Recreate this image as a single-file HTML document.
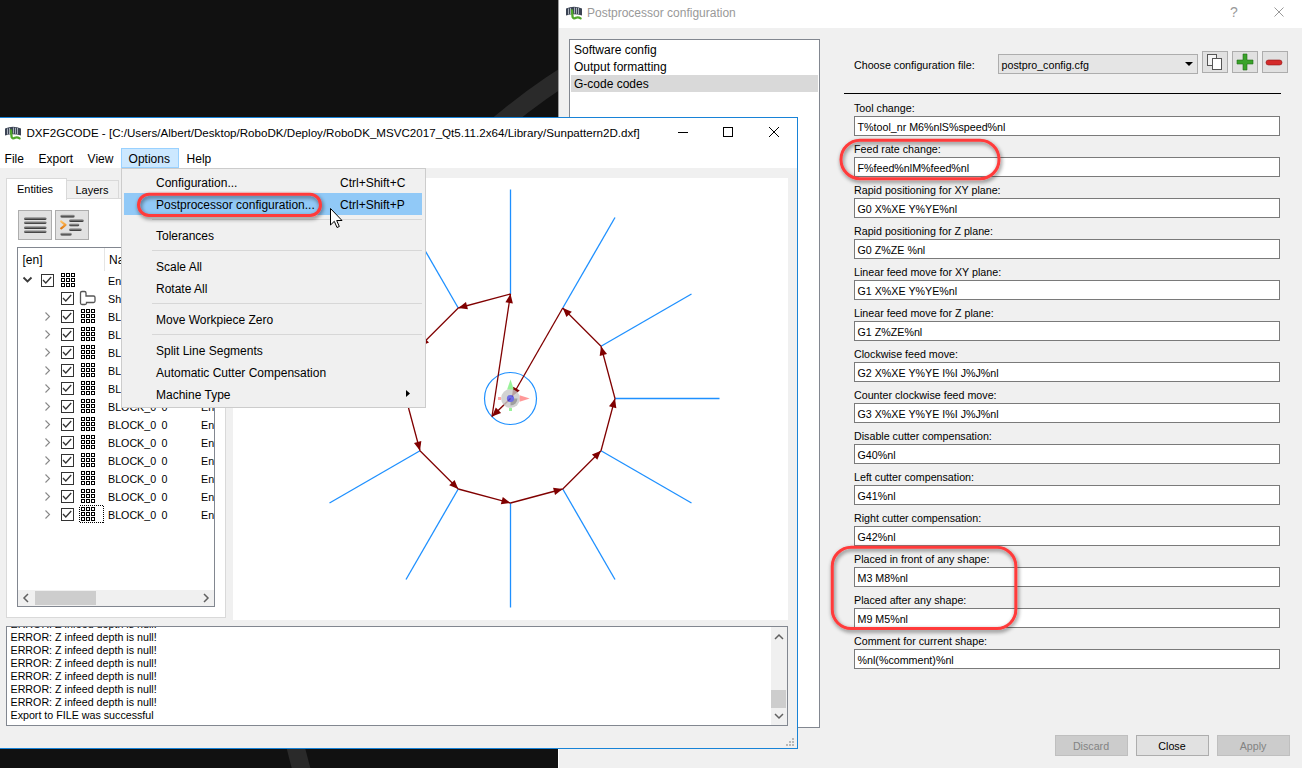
<!DOCTYPE html>
<html><head><meta charset="utf-8"><style>
html,body{margin:0;padding:0;background:#111;overflow:hidden;}
svg{display:block;font-family:"Liberation Sans", sans-serif;}
</style></head><body>
<svg width="1302" height="768" viewBox="0 0 1302 768">
<rect x="0" y="0" width="1302" height="768" fill="#111111"/>
<circle cx="900" cy="600" r="622" fill="none" stroke="#2a2a2a" stroke-width="18"/>
<rect x="558" y="0" width="1" height="118" fill="#9c9c9c"/>
<rect x="558" y="749" width="1" height="19" fill="#ffffff"/>
<rect x="559" y="0" width="743" height="28" fill="#ffffff"/>
<rect x="559" y="28" width="743" height="740" fill="#f0f0f0"/>
<g transform="translate(566,5)">
<path d="M0 3.5 Q8 0 16 3.5 L16 10.5 Q8 8 0 10.5 Z" fill="#3c4454"/>
<path d="M2.5 3.5 V9.5 M4.5 3 V9 M8.5 2.5 V8.5 M10.5 2.8 V8.8 M12.5 3 V9" stroke="#c5cbd6" stroke-width="0.8"/>
<path d="M6 5.5 L6.6 12 Q7.6 14.3 10 12.8 Q12 11.6 14.6 13.4" fill="none" stroke="#4fa82a" stroke-width="2.3" stroke-linecap="round"/>
</g>
<text x="587" y="17" font-size="12" fill="#999999" text-anchor="start" >Postprocessor configuration</text>
<text x="1234" y="17" font-size="14" fill="#999999" text-anchor="middle" >?</text>
<path d="M1274.5 7.5 L1283.5 16.5 M1283.5 7.5 L1274.5 16.5" stroke="#999" stroke-width="1"/>
<rect x="569.5" y="39.5" width="250" height="688" fill="#ffffff" stroke="#828790" stroke-width="1"/>
<rect x="571" y="75" width="247" height="17" fill="#d9d9d9"/>
<text x="574" y="54" font-size="12" fill="#000" text-anchor="start" >Software config</text>
<text x="574" y="71" font-size="12" fill="#000" text-anchor="start" >Output formatting</text>
<text x="574" y="88" font-size="12" fill="#000" text-anchor="start" >G-code codes</text>
<text x="854" y="68.6" font-size="10.7" fill="#000" text-anchor="start" >Choose configuration file:</text>
<rect x="998.5" y="54.5" width="199" height="19" fill="#e5e5e5" stroke="#adadad" stroke-width="1"/>
<text x="1001.5" y="68.8" font-size="10.7" fill="#000" text-anchor="start" >postpro_config.cfg</text>
<path d="M1185 62 L1193 62 L1189 66 Z" fill="#000"/>
<rect x="1202.5" y="51.5" width="25" height="21" fill="#e1e1e1" stroke="#adadad" stroke-width="1"/>
<rect x="1232.5" y="51.5" width="25" height="21" fill="#e1e1e1" stroke="#adadad" stroke-width="1"/>
<rect x="1262.5" y="51.5" width="25" height="21" fill="#e1e1e1" stroke="#adadad" stroke-width="1"/>
<g transform="translate(1207,54)"><rect x="0.5" y="0.5" width="9" height="11" fill="#f4f4f4" stroke="#555"/><rect x="5.5" y="4.5" width="9" height="11" fill="#fff" stroke="#555"/></g>
<g transform="translate(1237,54)"><path d="M6 0 h4 v6 h6 v4 h-6 v6 h-4 v-6 h-6 v-4 h6 z" fill="#3aa32a" stroke="#236b17" stroke-width="0.6"/></g>
<g transform="translate(1266,58)"><rect x="0" y="2" width="16" height="5" rx="2.5" fill="#d42a2a" stroke="#8e1515" stroke-width="0.6"/></g>
<rect x="844" y="93" width="437" height="1" fill="#000000"/>
<text x="854" y="111.8" font-size="10.7" fill="#000" text-anchor="start" >Tool change:</text>
<rect x="854.5" y="116.5" width="425" height="19" fill="#ffffff" stroke="#7a7a7a" stroke-width="1"/>
<text x="857.5" y="130.8" font-size="10.7" fill="#000" text-anchor="start" >T%tool_nr M6%nlS%speed%nl</text>
<text x="854" y="152.8" font-size="10.7" fill="#000" text-anchor="start" >Feed rate change:</text>
<rect x="854.5" y="157.5" width="425" height="19" fill="#ffffff" stroke="#7a7a7a" stroke-width="1"/>
<text x="857.5" y="171.8" font-size="10.7" fill="#000" text-anchor="start" >F%feed%nlM%feed%nl</text>
<text x="854" y="193.8" font-size="10.7" fill="#000" text-anchor="start" >Rapid positioning for XY plane:</text>
<rect x="854.5" y="198.5" width="425" height="19" fill="#ffffff" stroke="#7a7a7a" stroke-width="1"/>
<text x="857.5" y="212.8" font-size="10.7" fill="#000" text-anchor="start" >G0 X%XE Y%YE%nl</text>
<text x="854" y="234.8" font-size="10.7" fill="#000" text-anchor="start" >Rapid positioning for Z plane:</text>
<rect x="854.5" y="239.5" width="425" height="19" fill="#ffffff" stroke="#7a7a7a" stroke-width="1"/>
<text x="857.5" y="253.8" font-size="10.7" fill="#000" text-anchor="start" >G0 Z%ZE %nl</text>
<text x="854" y="275.8" font-size="10.7" fill="#000" text-anchor="start" >Linear feed move for XY plane:</text>
<rect x="854.5" y="280.5" width="425" height="19" fill="#ffffff" stroke="#7a7a7a" stroke-width="1"/>
<text x="857.5" y="294.8" font-size="10.7" fill="#000" text-anchor="start" >G1 X%XE Y%YE%nl</text>
<text x="854" y="316.8" font-size="10.7" fill="#000" text-anchor="start" >Linear feed move for Z plane:</text>
<rect x="854.5" y="321.5" width="425" height="19" fill="#ffffff" stroke="#7a7a7a" stroke-width="1"/>
<text x="857.5" y="335.8" font-size="10.7" fill="#000" text-anchor="start" >G1 Z%ZE%nl</text>
<text x="854" y="357.8" font-size="10.7" fill="#000" text-anchor="start" >Clockwise feed move:</text>
<rect x="854.5" y="362.5" width="425" height="19" fill="#ffffff" stroke="#7a7a7a" stroke-width="1"/>
<text x="857.5" y="376.8" font-size="10.7" fill="#000" text-anchor="start" >G2 X%XE Y%YE I%I J%J%nl</text>
<text x="854" y="398.8" font-size="10.7" fill="#000" text-anchor="start" >Counter clockwise feed move:</text>
<rect x="854.5" y="403.5" width="425" height="19" fill="#ffffff" stroke="#7a7a7a" stroke-width="1"/>
<text x="857.5" y="417.8" font-size="10.7" fill="#000" text-anchor="start" >G3 X%XE Y%YE I%I J%J%nl</text>
<text x="854" y="439.8" font-size="10.7" fill="#000" text-anchor="start" >Disable cutter compensation:</text>
<rect x="854.5" y="444.5" width="425" height="19" fill="#ffffff" stroke="#7a7a7a" stroke-width="1"/>
<text x="857.5" y="458.8" font-size="10.7" fill="#000" text-anchor="start" >G40%nl</text>
<text x="854" y="480.8" font-size="10.7" fill="#000" text-anchor="start" >Left cutter compensation:</text>
<rect x="854.5" y="485.5" width="425" height="19" fill="#ffffff" stroke="#7a7a7a" stroke-width="1"/>
<text x="857.5" y="499.8" font-size="10.7" fill="#000" text-anchor="start" >G41%nl</text>
<text x="854" y="521.8" font-size="10.7" fill="#000" text-anchor="start" >Right cutter compensation:</text>
<rect x="854.5" y="526.5" width="425" height="19" fill="#ffffff" stroke="#7a7a7a" stroke-width="1"/>
<text x="857.5" y="540.8" font-size="10.7" fill="#000" text-anchor="start" >G42%nl</text>
<text x="854" y="562.8" font-size="10.7" fill="#000" text-anchor="start" >Placed in front of any shape:</text>
<rect x="854.5" y="567.5" width="425" height="19" fill="#ffffff" stroke="#7a7a7a" stroke-width="1"/>
<text x="857.5" y="581.8" font-size="10.7" fill="#000" text-anchor="start" >M3 M8%nl</text>
<text x="854" y="603.8" font-size="10.7" fill="#000" text-anchor="start" >Placed after any shape:</text>
<rect x="854.5" y="608.5" width="425" height="19" fill="#ffffff" stroke="#7a7a7a" stroke-width="1"/>
<text x="857.5" y="622.8" font-size="10.7" fill="#000" text-anchor="start" >M9 M5%nl</text>
<text x="854" y="644.8" font-size="10.7" fill="#000" text-anchor="start" >Comment for current shape:</text>
<rect x="854.5" y="649.5" width="425" height="19" fill="#ffffff" stroke="#7a7a7a" stroke-width="1"/>
<text x="857.5" y="663.8" font-size="10.7" fill="#000" text-anchor="start" >%nl(%comment)%nl</text>
<rect x="1055.5" y="735.5" width="72" height="20" fill="#cccccc" stroke="#bfbfbf" stroke-width="1"/>
<text x="1091" y="750" font-size="10.7" fill="#838383" text-anchor="middle" >Discard</text>
<rect x="1136.5" y="735.5" width="72" height="20" fill="#e1e1e1" stroke="#adadad" stroke-width="1"/>
<text x="1172" y="750" font-size="10.7" fill="#000" text-anchor="middle" >Close</text>
<rect x="1217.5" y="735.5" width="72" height="20" fill="#cccccc" stroke="#bfbfbf" stroke-width="1"/>
<text x="1253" y="750" font-size="10.7" fill="#838383" text-anchor="middle" >Apply</text>
<rect x="0" y="118" width="797" height="50" fill="#ffffff"/>
<rect x="0" y="168" width="797" height="580" fill="#f0f0f0"/>
<rect x="0" y="117" width="798" height="1" fill="#1883d7"/>
<rect x="797" y="117" width="1" height="632" fill="#1883d7"/>
<rect x="0" y="748" width="798" height="1" fill="#1883d7"/>
<g transform="translate(5,125)">
<path d="M0 3.5 Q8 0 16 3.5 L16 10.5 Q8 8 0 10.5 Z" fill="#3c4454"/>
<path d="M2.5 3.5 V9.5 M4.5 3 V9 M8.5 2.5 V8.5 M10.5 2.8 V8.8 M12.5 3 V9" stroke="#c5cbd6" stroke-width="0.8"/>
<path d="M6 5.5 L6.6 12 Q7.6 14.3 10 12.8 Q12 11.6 14.6 13.4" fill="none" stroke="#4fa82a" stroke-width="2.3" stroke-linecap="round"/>
</g>
<text x="26.5" y="137" font-size="11.6" fill="#000" text-anchor="start" >DXF2GCODE - [C:/Users/Albert/Desktop/RoboDK/Deploy/RoboDK_MSVC2017_Qt5.11.2x64/Library/Sunpattern2D.dxf]</text>
<rect x="678" y="132" width="10" height="1" fill="#000"/>
<rect x="723.5" y="127.5" width="9" height="9" fill="none" stroke="#000" stroke-width="1"/>
<path d="M769 127 L779 137 M779 127 L769 137" stroke="#000" stroke-width="1"/>
<rect x="121.5" y="148.5" width="57" height="19" fill="#cce8ff" stroke="#99d1ff" stroke-width="1"/>
<text x="4.6" y="162.7" font-size="12" fill="#000" text-anchor="start" >File</text>
<text x="38.5" y="162.7" font-size="12" fill="#000" text-anchor="start" >Export</text>
<text x="87.6" y="162.7" font-size="12" fill="#000" text-anchor="start" >View</text>
<text x="128.60000000000002" y="162.7" font-size="12" fill="#000" text-anchor="start" >Options</text>
<text x="186.60000000000002" y="162.7" font-size="12" fill="#000" text-anchor="start" >Help</text>
<rect x="66.5" y="180.5" width="52" height="18" fill="#f0f0f0" stroke="#d9d9d9" stroke-width="1"/>
<rect x="6.5" y="198.5" width="219" height="419" fill="#ffffff" stroke="#d9d9d9" stroke-width="1"/>
<rect x="6.5" y="178.5" width="60" height="21" fill="#ffffff" stroke="#d9d9d9" stroke-width="1"/>
<rect x="7" y="198" width="59" height="2" fill="#ffffff"/>
<text x="17" y="192.7" font-size="11" fill="#000" text-anchor="start" >Entities</text>
<text x="75.5" y="193.7" font-size="11" fill="#000" text-anchor="start" >Layers</text>
<rect x="18.5" y="210.5" width="33" height="29" fill="#e1e1e1" stroke="#adadad" stroke-width="1"/>
<rect x="55.5" y="210.5" width="33" height="29" fill="#e1e1e1" stroke="#adadad" stroke-width="1"/>
<defs><linearGradient id="bar" x1="0" y1="0" x2="0" y2="1"><stop offset="0" stop-color="#c8c8c8"/><stop offset="0.35" stop-color="#8a8a8a"/><stop offset="1" stop-color="#2a2a2a"/></linearGradient><linearGradient id="org" x1="0" y1="0" x2="0" y2="1"><stop offset="0" stop-color="#ffc060"/><stop offset="1" stop-color="#e07a10"/></linearGradient></defs>
<rect x="24" y="216.9" width="22.5" height="3" rx="1.5" fill="url(#bar)"/>
<rect x="24" y="221.1" width="22.5" height="3" rx="1.5" fill="url(#bar)"/>
<rect x="24" y="225.9" width="22.5" height="3" rx="1.5" fill="url(#bar)"/>
<rect x="24" y="230.1" width="22.5" height="3" rx="1.5" fill="url(#bar)"/>
<rect x="60.4" y="214.4" width="14.300000000000004" height="3" rx="1.5" fill="url(#bar)"/>
<rect x="69.1" y="218.9" width="14.600000000000009" height="3" rx="1.5" fill="url(#bar)"/>
<rect x="69.1" y="223.3" width="10.200000000000003" height="3" rx="1.5" fill="url(#bar)"/>
<rect x="69.1" y="228.0" width="12.600000000000009" height="3" rx="1.5" fill="url(#bar)"/>
<rect x="60.4" y="232.5" width="11.350000000000001" height="3" rx="1.5" fill="url(#bar)"/>
<path d="M61.2 221.5 L65.5 224.9 L61.2 228.3" fill="none" stroke="url(#org)" stroke-width="2.2" stroke-linecap="round" stroke-linejoin="round"/>
<rect x="17.5" y="247.5" width="197" height="359" fill="#ffffff" stroke="#828790" stroke-width="1"/>
<g>
<rect x="104" y="248" width="1" height="23" fill="#e5e5e5"/>
<text x="22.5" y="264.2" font-size="12" fill="#000" text-anchor="start" >[en]</text>
<text x="109" y="264.2" font-size="12" fill="#000" text-anchor="start" >Name</text>
<clipPath id="treeclip"><rect x="18" y="248" width="196" height="342"/></clipPath>
<g clip-path="url(#treeclip)">
<path d="M23.5 277.5 L27.5 281.5 L31.5 277.5" fill="none" stroke="#3a3a3a" stroke-width="1.8"/>
<rect x="41.5" y="274.5" width="12" height="12" fill="#ffffff" stroke="#333333" stroke-width="1"/>
<path d="M43 280 L45.8 283 L51.2 277" fill="none" stroke="#333" stroke-width="1.3"/>
<rect x="61.5" y="273.5" width="3" height="3" fill="none" stroke="#000" stroke-width="1"/><rect x="66.5" y="273.5" width="3" height="3" fill="none" stroke="#000" stroke-width="1"/><rect x="71.5" y="273.5" width="3" height="3" fill="none" stroke="#000" stroke-width="1"/><rect x="61.5" y="278.5" width="3" height="3" fill="none" stroke="#000" stroke-width="1"/><rect x="66.5" y="278.5" width="3" height="3" fill="none" stroke="#000" stroke-width="1"/><rect x="71.5" y="278.5" width="3" height="3" fill="none" stroke="#000" stroke-width="1"/><rect x="61.5" y="283.5" width="3" height="3" fill="none" stroke="#000" stroke-width="1"/><rect x="66.5" y="283.5" width="3" height="3" fill="none" stroke="#000" stroke-width="1"/><rect x="71.5" y="283.5" width="3" height="3" fill="none" stroke="#000" stroke-width="1"/>
<text x="108" y="284.5" font-size="10.7" fill="#000" text-anchor="start" >Entities</text>
<rect x="61.5" y="292.5" width="12" height="12" fill="#ffffff" stroke="#333333" stroke-width="1"/>
<path d="M63 298 L65.8 301 L71.2 295" fill="none" stroke="#333" stroke-width="1.3"/>
<path d="M80.5 293.0 q0-1.5 1.5-1.5 h2.5 q1.5 0 1.5 1.5 v3 h7.5 q1.5 0 1.5 1.5 v3.5 q0 1.5-1.5 1.5 h-7 v0.5 q0 1.5-1.5 1.5 h-3 q-1.5 0-1.5-1.5 z" fill="none" stroke="#555" stroke-width="1.3"/>
<text x="108" y="302.5" font-size="10.7" fill="#000" text-anchor="start" >Shape</text>
<path d="M45.5 312.5 L49.5 316.5 L45.5 320.5" fill="none" stroke="#888" stroke-width="1.1"/>
<rect x="61.5" y="310.5" width="12" height="12" fill="#ffffff" stroke="#333333" stroke-width="1"/>
<path d="M63 316 L65.8 319 L71.2 313" fill="none" stroke="#333" stroke-width="1.3"/>
<rect x="81.5" y="309.5" width="3" height="3" fill="none" stroke="#000" stroke-width="1"/><rect x="86.5" y="309.5" width="3" height="3" fill="none" stroke="#000" stroke-width="1"/><rect x="91.5" y="309.5" width="3" height="3" fill="none" stroke="#000" stroke-width="1"/><rect x="81.5" y="314.5" width="3" height="3" fill="none" stroke="#000" stroke-width="1"/><rect x="86.5" y="314.5" width="3" height="3" fill="none" stroke="#000" stroke-width="1"/><rect x="91.5" y="314.5" width="3" height="3" fill="none" stroke="#000" stroke-width="1"/><rect x="81.5" y="319.5" width="3" height="3" fill="none" stroke="#000" stroke-width="1"/><rect x="86.5" y="319.5" width="3" height="3" fill="none" stroke="#000" stroke-width="1"/><rect x="91.5" y="319.5" width="3" height="3" fill="none" stroke="#000" stroke-width="1"/>
<text x="108" y="320.5" font-size="10.7" fill="#000" text-anchor="start" >BLOCK_0</text>
<text x="161.5" y="320.5" font-size="10.7" fill="#000" text-anchor="start" >0</text>
<text x="201" y="320.5" font-size="10.7" fill="#000" text-anchor="start" >Entity</text>
<path d="M45.5 330.5 L49.5 334.5 L45.5 338.5" fill="none" stroke="#888" stroke-width="1.1"/>
<rect x="61.5" y="328.5" width="12" height="12" fill="#ffffff" stroke="#333333" stroke-width="1"/>
<path d="M63 334 L65.8 337 L71.2 331" fill="none" stroke="#333" stroke-width="1.3"/>
<rect x="81.5" y="327.5" width="3" height="3" fill="none" stroke="#000" stroke-width="1"/><rect x="86.5" y="327.5" width="3" height="3" fill="none" stroke="#000" stroke-width="1"/><rect x="91.5" y="327.5" width="3" height="3" fill="none" stroke="#000" stroke-width="1"/><rect x="81.5" y="332.5" width="3" height="3" fill="none" stroke="#000" stroke-width="1"/><rect x="86.5" y="332.5" width="3" height="3" fill="none" stroke="#000" stroke-width="1"/><rect x="91.5" y="332.5" width="3" height="3" fill="none" stroke="#000" stroke-width="1"/><rect x="81.5" y="337.5" width="3" height="3" fill="none" stroke="#000" stroke-width="1"/><rect x="86.5" y="337.5" width="3" height="3" fill="none" stroke="#000" stroke-width="1"/><rect x="91.5" y="337.5" width="3" height="3" fill="none" stroke="#000" stroke-width="1"/>
<text x="108" y="338.5" font-size="10.7" fill="#000" text-anchor="start" >BLOCK_0</text>
<text x="161.5" y="338.5" font-size="10.7" fill="#000" text-anchor="start" >0</text>
<text x="201" y="338.5" font-size="10.7" fill="#000" text-anchor="start" >Entity</text>
<path d="M45.5 348.5 L49.5 352.5 L45.5 356.5" fill="none" stroke="#888" stroke-width="1.1"/>
<rect x="61.5" y="346.5" width="12" height="12" fill="#ffffff" stroke="#333333" stroke-width="1"/>
<path d="M63 352 L65.8 355 L71.2 349" fill="none" stroke="#333" stroke-width="1.3"/>
<rect x="81.5" y="345.5" width="3" height="3" fill="none" stroke="#000" stroke-width="1"/><rect x="86.5" y="345.5" width="3" height="3" fill="none" stroke="#000" stroke-width="1"/><rect x="91.5" y="345.5" width="3" height="3" fill="none" stroke="#000" stroke-width="1"/><rect x="81.5" y="350.5" width="3" height="3" fill="none" stroke="#000" stroke-width="1"/><rect x="86.5" y="350.5" width="3" height="3" fill="none" stroke="#000" stroke-width="1"/><rect x="91.5" y="350.5" width="3" height="3" fill="none" stroke="#000" stroke-width="1"/><rect x="81.5" y="355.5" width="3" height="3" fill="none" stroke="#000" stroke-width="1"/><rect x="86.5" y="355.5" width="3" height="3" fill="none" stroke="#000" stroke-width="1"/><rect x="91.5" y="355.5" width="3" height="3" fill="none" stroke="#000" stroke-width="1"/>
<text x="108" y="356.5" font-size="10.7" fill="#000" text-anchor="start" >BLOCK_0</text>
<text x="161.5" y="356.5" font-size="10.7" fill="#000" text-anchor="start" >0</text>
<text x="201" y="356.5" font-size="10.7" fill="#000" text-anchor="start" >Entity</text>
<path d="M45.5 366.5 L49.5 370.5 L45.5 374.5" fill="none" stroke="#888" stroke-width="1.1"/>
<rect x="61.5" y="364.5" width="12" height="12" fill="#ffffff" stroke="#333333" stroke-width="1"/>
<path d="M63 370 L65.8 373 L71.2 367" fill="none" stroke="#333" stroke-width="1.3"/>
<rect x="81.5" y="363.5" width="3" height="3" fill="none" stroke="#000" stroke-width="1"/><rect x="86.5" y="363.5" width="3" height="3" fill="none" stroke="#000" stroke-width="1"/><rect x="91.5" y="363.5" width="3" height="3" fill="none" stroke="#000" stroke-width="1"/><rect x="81.5" y="368.5" width="3" height="3" fill="none" stroke="#000" stroke-width="1"/><rect x="86.5" y="368.5" width="3" height="3" fill="none" stroke="#000" stroke-width="1"/><rect x="91.5" y="368.5" width="3" height="3" fill="none" stroke="#000" stroke-width="1"/><rect x="81.5" y="373.5" width="3" height="3" fill="none" stroke="#000" stroke-width="1"/><rect x="86.5" y="373.5" width="3" height="3" fill="none" stroke="#000" stroke-width="1"/><rect x="91.5" y="373.5" width="3" height="3" fill="none" stroke="#000" stroke-width="1"/>
<text x="108" y="374.5" font-size="10.7" fill="#000" text-anchor="start" >BLOCK_0</text>
<text x="161.5" y="374.5" font-size="10.7" fill="#000" text-anchor="start" >0</text>
<text x="201" y="374.5" font-size="10.7" fill="#000" text-anchor="start" >Entity</text>
<path d="M45.5 384.5 L49.5 388.5 L45.5 392.5" fill="none" stroke="#888" stroke-width="1.1"/>
<rect x="61.5" y="382.5" width="12" height="12" fill="#ffffff" stroke="#333333" stroke-width="1"/>
<path d="M63 388 L65.8 391 L71.2 385" fill="none" stroke="#333" stroke-width="1.3"/>
<rect x="81.5" y="381.5" width="3" height="3" fill="none" stroke="#000" stroke-width="1"/><rect x="86.5" y="381.5" width="3" height="3" fill="none" stroke="#000" stroke-width="1"/><rect x="91.5" y="381.5" width="3" height="3" fill="none" stroke="#000" stroke-width="1"/><rect x="81.5" y="386.5" width="3" height="3" fill="none" stroke="#000" stroke-width="1"/><rect x="86.5" y="386.5" width="3" height="3" fill="none" stroke="#000" stroke-width="1"/><rect x="91.5" y="386.5" width="3" height="3" fill="none" stroke="#000" stroke-width="1"/><rect x="81.5" y="391.5" width="3" height="3" fill="none" stroke="#000" stroke-width="1"/><rect x="86.5" y="391.5" width="3" height="3" fill="none" stroke="#000" stroke-width="1"/><rect x="91.5" y="391.5" width="3" height="3" fill="none" stroke="#000" stroke-width="1"/>
<text x="108" y="392.5" font-size="10.7" fill="#000" text-anchor="start" >BLOCK_0</text>
<text x="161.5" y="392.5" font-size="10.7" fill="#000" text-anchor="start" >0</text>
<text x="201" y="392.5" font-size="10.7" fill="#000" text-anchor="start" >Entity</text>
<path d="M45.5 402.5 L49.5 406.5 L45.5 410.5" fill="none" stroke="#888" stroke-width="1.1"/>
<rect x="61.5" y="400.5" width="12" height="12" fill="#ffffff" stroke="#333333" stroke-width="1"/>
<path d="M63 406 L65.8 409 L71.2 403" fill="none" stroke="#333" stroke-width="1.3"/>
<rect x="81.5" y="399.5" width="3" height="3" fill="none" stroke="#000" stroke-width="1"/><rect x="86.5" y="399.5" width="3" height="3" fill="none" stroke="#000" stroke-width="1"/><rect x="91.5" y="399.5" width="3" height="3" fill="none" stroke="#000" stroke-width="1"/><rect x="81.5" y="404.5" width="3" height="3" fill="none" stroke="#000" stroke-width="1"/><rect x="86.5" y="404.5" width="3" height="3" fill="none" stroke="#000" stroke-width="1"/><rect x="91.5" y="404.5" width="3" height="3" fill="none" stroke="#000" stroke-width="1"/><rect x="81.5" y="409.5" width="3" height="3" fill="none" stroke="#000" stroke-width="1"/><rect x="86.5" y="409.5" width="3" height="3" fill="none" stroke="#000" stroke-width="1"/><rect x="91.5" y="409.5" width="3" height="3" fill="none" stroke="#000" stroke-width="1"/>
<text x="108" y="410.5" font-size="10.7" fill="#000" text-anchor="start" >BLOCK_0</text>
<text x="161.5" y="410.5" font-size="10.7" fill="#000" text-anchor="start" >0</text>
<text x="201" y="410.5" font-size="10.7" fill="#000" text-anchor="start" >Entity</text>
<path d="M45.5 420.5 L49.5 424.5 L45.5 428.5" fill="none" stroke="#888" stroke-width="1.1"/>
<rect x="61.5" y="418.5" width="12" height="12" fill="#ffffff" stroke="#333333" stroke-width="1"/>
<path d="M63 424 L65.8 427 L71.2 421" fill="none" stroke="#333" stroke-width="1.3"/>
<rect x="81.5" y="417.5" width="3" height="3" fill="none" stroke="#000" stroke-width="1"/><rect x="86.5" y="417.5" width="3" height="3" fill="none" stroke="#000" stroke-width="1"/><rect x="91.5" y="417.5" width="3" height="3" fill="none" stroke="#000" stroke-width="1"/><rect x="81.5" y="422.5" width="3" height="3" fill="none" stroke="#000" stroke-width="1"/><rect x="86.5" y="422.5" width="3" height="3" fill="none" stroke="#000" stroke-width="1"/><rect x="91.5" y="422.5" width="3" height="3" fill="none" stroke="#000" stroke-width="1"/><rect x="81.5" y="427.5" width="3" height="3" fill="none" stroke="#000" stroke-width="1"/><rect x="86.5" y="427.5" width="3" height="3" fill="none" stroke="#000" stroke-width="1"/><rect x="91.5" y="427.5" width="3" height="3" fill="none" stroke="#000" stroke-width="1"/>
<text x="108" y="428.5" font-size="10.7" fill="#000" text-anchor="start" >BLOCK_0</text>
<text x="161.5" y="428.5" font-size="10.7" fill="#000" text-anchor="start" >0</text>
<text x="201" y="428.5" font-size="10.7" fill="#000" text-anchor="start" >Entity</text>
<path d="M45.5 438.5 L49.5 442.5 L45.5 446.5" fill="none" stroke="#888" stroke-width="1.1"/>
<rect x="61.5" y="436.5" width="12" height="12" fill="#ffffff" stroke="#333333" stroke-width="1"/>
<path d="M63 442 L65.8 445 L71.2 439" fill="none" stroke="#333" stroke-width="1.3"/>
<rect x="81.5" y="435.5" width="3" height="3" fill="none" stroke="#000" stroke-width="1"/><rect x="86.5" y="435.5" width="3" height="3" fill="none" stroke="#000" stroke-width="1"/><rect x="91.5" y="435.5" width="3" height="3" fill="none" stroke="#000" stroke-width="1"/><rect x="81.5" y="440.5" width="3" height="3" fill="none" stroke="#000" stroke-width="1"/><rect x="86.5" y="440.5" width="3" height="3" fill="none" stroke="#000" stroke-width="1"/><rect x="91.5" y="440.5" width="3" height="3" fill="none" stroke="#000" stroke-width="1"/><rect x="81.5" y="445.5" width="3" height="3" fill="none" stroke="#000" stroke-width="1"/><rect x="86.5" y="445.5" width="3" height="3" fill="none" stroke="#000" stroke-width="1"/><rect x="91.5" y="445.5" width="3" height="3" fill="none" stroke="#000" stroke-width="1"/>
<text x="108" y="446.5" font-size="10.7" fill="#000" text-anchor="start" >BLOCK_0</text>
<text x="161.5" y="446.5" font-size="10.7" fill="#000" text-anchor="start" >0</text>
<text x="201" y="446.5" font-size="10.7" fill="#000" text-anchor="start" >Entity</text>
<path d="M45.5 456.5 L49.5 460.5 L45.5 464.5" fill="none" stroke="#888" stroke-width="1.1"/>
<rect x="61.5" y="454.5" width="12" height="12" fill="#ffffff" stroke="#333333" stroke-width="1"/>
<path d="M63 460 L65.8 463 L71.2 457" fill="none" stroke="#333" stroke-width="1.3"/>
<rect x="81.5" y="453.5" width="3" height="3" fill="none" stroke="#000" stroke-width="1"/><rect x="86.5" y="453.5" width="3" height="3" fill="none" stroke="#000" stroke-width="1"/><rect x="91.5" y="453.5" width="3" height="3" fill="none" stroke="#000" stroke-width="1"/><rect x="81.5" y="458.5" width="3" height="3" fill="none" stroke="#000" stroke-width="1"/><rect x="86.5" y="458.5" width="3" height="3" fill="none" stroke="#000" stroke-width="1"/><rect x="91.5" y="458.5" width="3" height="3" fill="none" stroke="#000" stroke-width="1"/><rect x="81.5" y="463.5" width="3" height="3" fill="none" stroke="#000" stroke-width="1"/><rect x="86.5" y="463.5" width="3" height="3" fill="none" stroke="#000" stroke-width="1"/><rect x="91.5" y="463.5" width="3" height="3" fill="none" stroke="#000" stroke-width="1"/>
<text x="108" y="464.5" font-size="10.7" fill="#000" text-anchor="start" >BLOCK_0</text>
<text x="161.5" y="464.5" font-size="10.7" fill="#000" text-anchor="start" >0</text>
<text x="201" y="464.5" font-size="10.7" fill="#000" text-anchor="start" >Entity</text>
<path d="M45.5 474.5 L49.5 478.5 L45.5 482.5" fill="none" stroke="#888" stroke-width="1.1"/>
<rect x="61.5" y="472.5" width="12" height="12" fill="#ffffff" stroke="#333333" stroke-width="1"/>
<path d="M63 478 L65.8 481 L71.2 475" fill="none" stroke="#333" stroke-width="1.3"/>
<rect x="81.5" y="471.5" width="3" height="3" fill="none" stroke="#000" stroke-width="1"/><rect x="86.5" y="471.5" width="3" height="3" fill="none" stroke="#000" stroke-width="1"/><rect x="91.5" y="471.5" width="3" height="3" fill="none" stroke="#000" stroke-width="1"/><rect x="81.5" y="476.5" width="3" height="3" fill="none" stroke="#000" stroke-width="1"/><rect x="86.5" y="476.5" width="3" height="3" fill="none" stroke="#000" stroke-width="1"/><rect x="91.5" y="476.5" width="3" height="3" fill="none" stroke="#000" stroke-width="1"/><rect x="81.5" y="481.5" width="3" height="3" fill="none" stroke="#000" stroke-width="1"/><rect x="86.5" y="481.5" width="3" height="3" fill="none" stroke="#000" stroke-width="1"/><rect x="91.5" y="481.5" width="3" height="3" fill="none" stroke="#000" stroke-width="1"/>
<text x="108" y="482.5" font-size="10.7" fill="#000" text-anchor="start" >BLOCK_0</text>
<text x="161.5" y="482.5" font-size="10.7" fill="#000" text-anchor="start" >0</text>
<text x="201" y="482.5" font-size="10.7" fill="#000" text-anchor="start" >Entity</text>
<path d="M45.5 492.5 L49.5 496.5 L45.5 500.5" fill="none" stroke="#888" stroke-width="1.1"/>
<rect x="61.5" y="490.5" width="12" height="12" fill="#ffffff" stroke="#333333" stroke-width="1"/>
<path d="M63 496 L65.8 499 L71.2 493" fill="none" stroke="#333" stroke-width="1.3"/>
<rect x="81.5" y="489.5" width="3" height="3" fill="none" stroke="#000" stroke-width="1"/><rect x="86.5" y="489.5" width="3" height="3" fill="none" stroke="#000" stroke-width="1"/><rect x="91.5" y="489.5" width="3" height="3" fill="none" stroke="#000" stroke-width="1"/><rect x="81.5" y="494.5" width="3" height="3" fill="none" stroke="#000" stroke-width="1"/><rect x="86.5" y="494.5" width="3" height="3" fill="none" stroke="#000" stroke-width="1"/><rect x="91.5" y="494.5" width="3" height="3" fill="none" stroke="#000" stroke-width="1"/><rect x="81.5" y="499.5" width="3" height="3" fill="none" stroke="#000" stroke-width="1"/><rect x="86.5" y="499.5" width="3" height="3" fill="none" stroke="#000" stroke-width="1"/><rect x="91.5" y="499.5" width="3" height="3" fill="none" stroke="#000" stroke-width="1"/>
<text x="108" y="500.5" font-size="10.7" fill="#000" text-anchor="start" >BLOCK_0</text>
<text x="161.5" y="500.5" font-size="10.7" fill="#000" text-anchor="start" >0</text>
<text x="201" y="500.5" font-size="10.7" fill="#000" text-anchor="start" >Entity</text>
<path d="M45.5 510.5 L49.5 514.5 L45.5 518.5" fill="none" stroke="#888" stroke-width="1.1"/>
<rect x="61.5" y="508.5" width="12" height="12" fill="#ffffff" stroke="#333333" stroke-width="1"/>
<path d="M63 514 L65.8 517 L71.2 511" fill="none" stroke="#333" stroke-width="1.3"/>
<rect x="81.5" y="507.5" width="3" height="3" fill="none" stroke="#000" stroke-width="1"/><rect x="86.5" y="507.5" width="3" height="3" fill="none" stroke="#000" stroke-width="1"/><rect x="91.5" y="507.5" width="3" height="3" fill="none" stroke="#000" stroke-width="1"/><rect x="81.5" y="512.5" width="3" height="3" fill="none" stroke="#000" stroke-width="1"/><rect x="86.5" y="512.5" width="3" height="3" fill="none" stroke="#000" stroke-width="1"/><rect x="91.5" y="512.5" width="3" height="3" fill="none" stroke="#000" stroke-width="1"/><rect x="81.5" y="517.5" width="3" height="3" fill="none" stroke="#000" stroke-width="1"/><rect x="86.5" y="517.5" width="3" height="3" fill="none" stroke="#000" stroke-width="1"/><rect x="91.5" y="517.5" width="3" height="3" fill="none" stroke="#000" stroke-width="1"/>
<text x="108" y="518.5" font-size="10.7" fill="#000" text-anchor="start" >BLOCK_0</text>
<text x="161.5" y="518.5" font-size="10.7" fill="#000" text-anchor="start" >0</text>
<text x="201" y="518.5" font-size="10.7" fill="#000" text-anchor="start" >Entity</text>
</g>
<rect x="79.5" y="505.5" width="24" height="17" fill="none" stroke="#000" stroke-width="1" stroke-dasharray="1 1" shape-rendering="crispEdges"/>
</g>
<rect x="18" y="590" width="196" height="16" fill="#f0f0f0"/>
<rect x="35" y="591" width="61" height="14" fill="#cdcdcd"/>
<path d="M28 594 L24 598 L28 602" fill="none" stroke="#606060" stroke-width="1.5"/>
<path d="M204 594 L208 598 L204 602" fill="none" stroke="#606060" stroke-width="1.5"/>
<rect x="233" y="178" width="555" height="442" fill="#ffffff"/>
<g>
<line x1="615.00" y1="398.50" x2="719.50" y2="398.50" stroke="#1e90ff" stroke-width="1.3"/>
<line x1="601.00" y1="346.25" x2="691.50" y2="294.00" stroke="#1e90ff" stroke-width="1.3"/>
<line x1="562.75" y1="308.00" x2="615.00" y2="217.50" stroke="#1e90ff" stroke-width="1.3"/>
<line x1="510.50" y1="294.00" x2="510.50" y2="189.50" stroke="#1e90ff" stroke-width="1.3"/>
<line x1="458.25" y1="308.00" x2="406.00" y2="217.50" stroke="#1e90ff" stroke-width="1.3"/>
<line x1="420.00" y1="346.25" x2="329.50" y2="294.00" stroke="#1e90ff" stroke-width="1.3"/>
<line x1="406.00" y1="398.50" x2="301.50" y2="398.50" stroke="#1e90ff" stroke-width="1.3"/>
<line x1="420.00" y1="450.75" x2="329.50" y2="503.00" stroke="#1e90ff" stroke-width="1.3"/>
<line x1="458.25" y1="489.00" x2="406.00" y2="579.50" stroke="#1e90ff" stroke-width="1.3"/>
<line x1="510.50" y1="503.00" x2="510.50" y2="607.50" stroke="#1e90ff" stroke-width="1.3"/>
<line x1="562.75" y1="489.00" x2="615.00" y2="579.50" stroke="#1e90ff" stroke-width="1.3"/>
<line x1="601.00" y1="450.75" x2="691.50" y2="503.00" stroke="#1e90ff" stroke-width="1.3"/>
</g>
<circle cx="510.5" cy="398.5" r="26" fill="none" stroke="#1e90ff" stroke-width="1.2"/>
<line x1="510.50" y1="398.50" x2="492.00" y2="416.50" stroke="#800000" stroke-width="1.3"/>
<path d="M492.00 416.50 L495.80 407.50 L501.10 412.95 Z" fill="#800000"/>
<line x1="492.00" y1="416.50" x2="510.50" y2="294.00" stroke="#800000" stroke-width="1.3"/>
<path d="M510.50 294.00 L512.91 303.47 L505.40 302.33 Z" fill="#800000"/>
<line x1="510.50" y1="294.00" x2="458.25" y2="308.00" stroke="#800000" stroke-width="1.3"/>
<path d="M458.25 308.00 L465.96 302.00 L467.93 309.34 Z" fill="#800000"/>
<line x1="458.25" y1="308.00" x2="420.00" y2="346.25" stroke="#800000" stroke-width="1.3"/>
<path d="M420.00 346.25 L423.68 337.20 L429.05 342.57 Z" fill="#800000"/>
<line x1="420.00" y1="346.25" x2="406.00" y2="398.50" stroke="#800000" stroke-width="1.3"/>
<path d="M406.00 398.50 L404.66 388.82 L412.00 390.79 Z" fill="#800000"/>
<line x1="406.00" y1="398.50" x2="420.00" y2="450.75" stroke="#800000" stroke-width="1.3"/>
<path d="M420.00 450.75 L414.00 443.04 L421.34 441.07 Z" fill="#800000"/>
<line x1="420.00" y1="450.75" x2="458.25" y2="489.00" stroke="#800000" stroke-width="1.3"/>
<path d="M458.25 489.00 L449.20 485.32 L454.57 479.95 Z" fill="#800000"/>
<line x1="458.25" y1="489.00" x2="510.50" y2="503.00" stroke="#800000" stroke-width="1.3"/>
<path d="M510.50 503.00 L500.82 504.34 L502.79 497.00 Z" fill="#800000"/>
<line x1="510.50" y1="503.00" x2="562.75" y2="489.00" stroke="#800000" stroke-width="1.3"/>
<path d="M562.75 489.00 L555.04 495.00 L553.07 487.66 Z" fill="#800000"/>
<line x1="562.75" y1="489.00" x2="601.00" y2="450.75" stroke="#800000" stroke-width="1.3"/>
<path d="M601.00 450.75 L597.32 459.80 L591.95 454.43 Z" fill="#800000"/>
<line x1="601.00" y1="450.75" x2="615.00" y2="398.50" stroke="#800000" stroke-width="1.3"/>
<path d="M615.00 398.50 L616.34 408.18 L609.00 406.21 Z" fill="#800000"/>
<line x1="615.00" y1="398.50" x2="601.00" y2="346.25" stroke="#800000" stroke-width="1.3"/>
<path d="M601.00 346.25 L607.00 353.96 L599.66 355.93 Z" fill="#800000"/>
<line x1="601.00" y1="346.25" x2="562.75" y2="308.00" stroke="#800000" stroke-width="1.3"/>
<path d="M562.75 308.00 L571.80 311.68 L566.43 317.05 Z" fill="#800000"/>
<line x1="562.75" y1="308.00" x2="512.00" y2="396.50" stroke="#800000" stroke-width="1.3"/>
<path d="M512.00 396.50 L513.18 386.80 L519.77 390.58 Z" fill="#800000"/>
<g opacity="0.8">
<circle cx="510.5" cy="398.5" r="9.4" fill="#c8c8c8"/>
<path d="M510.5 398.5 L517.5 398.5 A7 7 0 0 1 510.5 405.5 Z" fill="#888"/>
<path d="M510.5 379.6 L507.1 389.6 L513.9 389.6 Z" fill="#80f080"/>
<path d="M529.7 398.5 L519.6 395.2 L519.6 401.8 Z" fill="#ff8080"/>
<rect x="498" y="397.0" width="3" height="3" fill="#ff9090"/>
<rect x="509.0" y="408" width="3" height="3" fill="#80f080"/>
<circle cx="510.5" cy="398.5" r="3.6" fill="#4a4ae0"/>
</g>
<rect x="6.5" y="626.5" width="781" height="99" fill="#ffffff" stroke="#828790" stroke-width="1"/>
<clipPath id="logclip"><rect x="7" y="627" width="764" height="98"/></clipPath>
<g clip-path="url(#logclip)">
<text x="10.5" y="627.6" font-size="10.7" fill="#000" text-anchor="start" >ERROR: Z infeed depth is null!</text>
<text x="10.5" y="640.6" font-size="10.7" fill="#000" text-anchor="start" >ERROR: Z infeed depth is null!</text>
<text x="10.5" y="653.6" font-size="10.7" fill="#000" text-anchor="start" >ERROR: Z infeed depth is null!</text>
<text x="10.5" y="666.6" font-size="10.7" fill="#000" text-anchor="start" >ERROR: Z infeed depth is null!</text>
<text x="10.5" y="679.6" font-size="10.7" fill="#000" text-anchor="start" >ERROR: Z infeed depth is null!</text>
<text x="10.5" y="692.6" font-size="10.7" fill="#000" text-anchor="start" >ERROR: Z infeed depth is null!</text>
<text x="10.5" y="705.6" font-size="10.7" fill="#000" text-anchor="start" >ERROR: Z infeed depth is null!</text>
<text x="10.5" y="718.6" font-size="10.7" fill="#000" text-anchor="start" >Export to FILE was successful</text>
</g>
<rect x="771" y="627" width="16" height="98" fill="#f0f0f0"/>
<rect x="771" y="690" width="15" height="18" fill="#cdcdcd"/>
<path d="M775 639 L779 635 L783 639" fill="none" stroke="#606060" stroke-width="1.5"/>
<path d="M775 714 L779 718 L783 714" fill="none" stroke="#606060" stroke-width="1.5"/>
<rect x="792" y="738" width="2" height="2" fill="#b8b8b8"/>
<rect x="789" y="741" width="2" height="2" fill="#b8b8b8"/>
<rect x="792" y="741" width="2" height="2" fill="#b8b8b8"/>
<rect x="786" y="744" width="2" height="2" fill="#b8b8b8"/>
<rect x="789" y="744" width="2" height="2" fill="#b8b8b8"/>
<rect x="792" y="744" width="2" height="2" fill="#b8b8b8"/>
<g>
<rect x="121.5" y="168.5" width="304" height="239" fill="#f0f0f0" stroke="#cccccc" stroke-width="1"/>
<rect x="124" y="193" width="298" height="22" fill="#91c9f7"/>
<rect x="152" y="219" width="270" height="1" fill="#d7d7d7"/>
<rect x="152" y="250" width="270" height="1" fill="#d7d7d7"/>
<rect x="152" y="303" width="270" height="1" fill="#d7d7d7"/>
<rect x="152" y="334" width="270" height="1" fill="#d7d7d7"/>
<text x="156" y="187.3" font-size="12" fill="#000" text-anchor="start" >Configuration...</text>
<text x="340" y="187.3" font-size="12" fill="#000" text-anchor="start" >Ctrl+Shift+C</text>
<text x="156" y="209.3" font-size="12" fill="#000" text-anchor="start" >Postprocessor configuration...</text>
<text x="340" y="209.3" font-size="12" fill="#000" text-anchor="start" >Ctrl+Shift+P</text>
<text x="156" y="240" font-size="12" fill="#000" text-anchor="start" >Tolerances</text>
<text x="156" y="271" font-size="12" fill="#000" text-anchor="start" >Scale All</text>
<text x="156" y="292.7" font-size="12" fill="#000" text-anchor="start" >Rotate All</text>
<text x="156" y="323.5" font-size="12" fill="#000" text-anchor="start" >Move Workpiece Zero</text>
<text x="156" y="355" font-size="12" fill="#000" text-anchor="start" >Split Line Segments</text>
<text x="156" y="376.7" font-size="12" fill="#000" text-anchor="start" >Automatic Cutter Compensation</text>
<text x="156" y="398.5" font-size="12" fill="#000" text-anchor="start" >Machine Type</text>
<path d="M406 390 L410 393.5 L406 397 Z" fill="#000"/>
</g>
<defs><filter id="sh" x="-20%" y="-20%" width="140%" height="160%"><feGaussianBlur in="SourceAlpha" stdDeviation="2"/><feOffset dx="0.5" dy="1.5"/><feComponentTransfer><feFuncA type="linear" slope="0.55"/></feComponentTransfer><feMerge><feMergeNode/><feMergeNode in="SourceGraphic"/></feMerge></filter></defs>
<rect x="138.5" y="194.3" width="182" height="21.2" rx="10.6" fill="none" stroke="#ff3b3b" stroke-width="3" filter="url(#sh)"/>
<rect x="841" y="140.25" width="158" height="38.4" rx="19" fill="none" stroke="#ff3b3b" stroke-width="3" filter="url(#sh)"/>
<rect x="832.25" y="547.35" width="183.6" height="81.2" rx="19" fill="none" stroke="#ff3b3b" stroke-width="3" filter="url(#sh)"/>
<path d="M330.5 208.5 L330.5 225 L334.3 221.3 L337 227.5 L339.3 226.5 L336.7 220.5 L342 220.5 Z" fill="#fff" stroke="#000" stroke-width="1"/>
</svg></body></html>
